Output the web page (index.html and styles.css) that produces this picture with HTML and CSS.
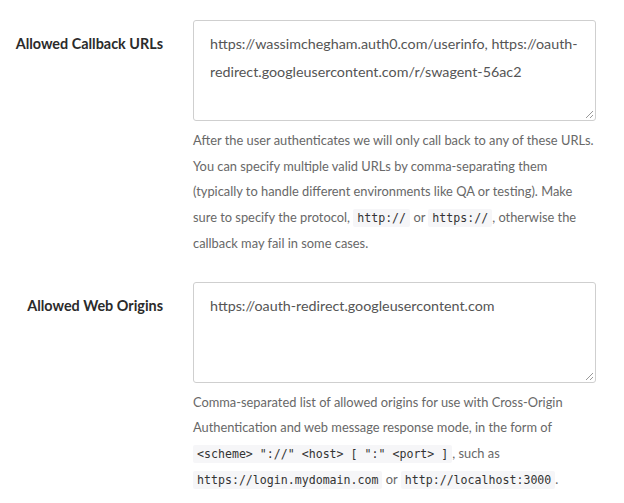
FILE: index.html
```html
<!DOCTYPE html>
<html>
<head>
<meta charset="utf-8">
<link rel="stylesheet" href="styles.css">
</head>
<body>
<div class="form">
  <div class="row">
    <label class="label">Allowed Callback URLs</label>
    <div class="field">
      <div class="textarea">https://wassimchegham.auth0.com/userinfo, https://oauth-redirect.googleusercontent.com/r/swagent-56ac2<span class="grip"></span></div>
      <p class="help">After the user authenticates we will only call back to any of these URLs. You can specify multiple valid URLs by comma-separating them (typically to handle different environments like QA or testing). Make sure to specify the protocol, <code>http://</code> or <code>https://</code>, otherwise the callback may fail in some cases.</p>
    </div>
  </div>
  <div class="row">
    <label class="label">Allowed Web Origins</label>
    <div class="field">
      <div class="textarea">https://oauth-redirect.googleusercontent.com<span class="grip"></span></div>
      <p class="help">Comma-separated list of allowed origins for use with Cross-Origin Authentication and web message response mode, in the form of <code>&lt;scheme&gt; "://" &lt;host&gt; [ ":" &lt;port&gt; ]</code>, such as <code>https://login.mydomain.com</code> or <code>http://localhost:3000</code>.</p>
    </div>
  </div>
</div>
</body>
</html>
```
FILE: styles.css
```css
html, body {
  margin: 0;
  padding: 0;
  background: #fff;
}
body {
  font-family: Lato, "Liberation Sans", sans-serif;
}
.form {
  padding-top: 20px;
  display: flex;
  flex-direction: column;
  gap: 25px;
}
.row {
  display: grid;
  grid-template-columns: 163px 403px;
  column-gap: 30px;
  align-items: start;
}
.label {
  text-align: right;
  font-weight: 700;
  font-size: 14.4px;
  color: #2b2b2b;
  padding-top: 14px;
  line-height: 20px;
}
.textarea {
  position: relative;
  box-sizing: border-box;
  height: 101px;
  border: 1px solid #cfcfcf;
  border-radius: 3px;
  padding: 9px 16px;
  font-size: 14.3px;
  line-height: 28px;
  color: #555;
}
.grip {
  position: absolute;
  right: 2px;
  bottom: 2px;
  width: 7px;
  height: 7px;
  background: linear-gradient(135deg, transparent 45%, #999 45%, #999 55%, transparent 55%, transparent 75%, #999 75%, #999 85%, transparent 85%);
}
.help {
  margin: 7px 0 0;
  font-size: 12.85px;
  line-height: 25.7px;
  color: #686868;
}
code {
  display: inline-block;
  font-family: "DejaVu Sans Mono", monospace;
  font-size: 11.6px;
  line-height: 18px;
  background: #f6f6f8;
  color: #333;
  padding: 0 4px;
  border-radius: 2px;
}
```
